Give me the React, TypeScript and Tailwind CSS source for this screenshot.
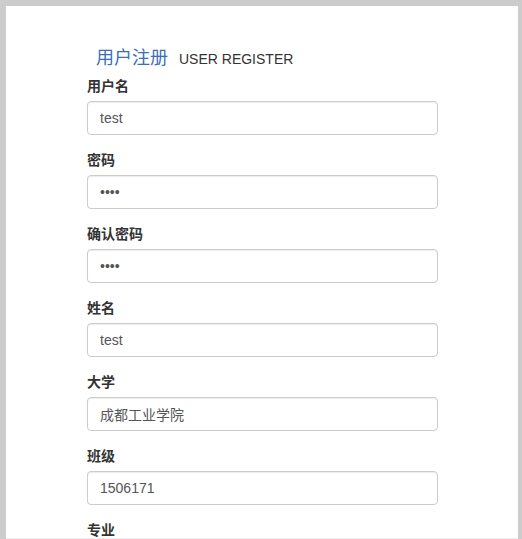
import React from 'react';

const fields = [
  { label: '用户名', value: 'test', type: 'text' },
  { label: '密码', value: '1234', type: 'password' },
  { label: '确认密码', value: '1234', type: 'password' },
  { label: '姓名', value: 'test', type: 'text' },
  { label: '大学', value: '成都工业学院', type: 'text' },
  { label: '班级', value: '1506171', type: 'text' },
  { label: '专业', value: '', type: 'text' },
];

export default function App() {
  return (
    <div
      className="h-[539px] overflow-hidden bg-[#cccccc] pt-[6px] pl-[6px] pr-[4px]"
      style={{ fontFamily: '"Liberation Sans", Arial, "Noto Sans CJK SC", sans-serif' }}
    >
      <div className="h-full bg-white border-b border-[#eeeeee] pl-[81px] pr-[80px] pt-[34px]">
        {/* Title */}
        <h3 className="flex items-baseline pl-[9px] h-[36px] leading-[36px]">
          <span className="text-[18px] text-[#3b6fb6]">用户注册</span>
          <span className="ml-[11px] text-[14px] text-[#333333]">USER REGISTER</span>
        </h3>

        {/* Form */}
        <form className="w-[351px]">
          {fields.map((f) => (
            <div key={f.label} className="mb-[15px]">
              <label className="block mb-[5px] h-[20px] leading-[20px] text-[14px] font-bold text-[#333333]">
                {f.label}
              </label>
              <input
                type={f.type}
                defaultValue={f.value}
                readOnly
                className="block w-full h-[34px] px-[12px] border border-[#cccccc] rounded-[4px] text-[14px] text-[#555555] bg-white shadow-[inset_0_1px_1px_rgba(0,0,0,0.075)] outline-none"
              />
            </div>
          ))}
        </form>
      </div>
    </div>
  );
}
